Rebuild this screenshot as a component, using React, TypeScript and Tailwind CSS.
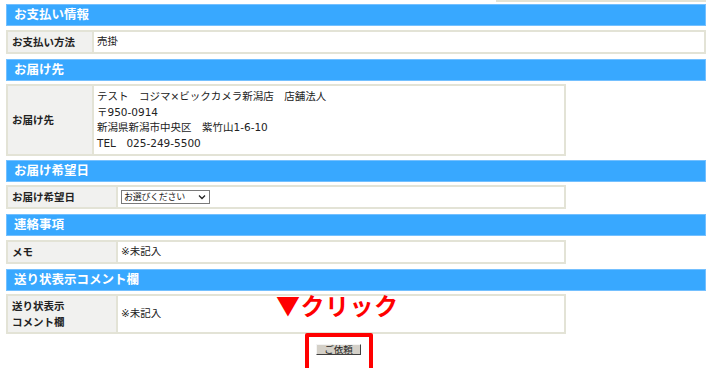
import React from "react";

type Row = { label: React.ReactNode; value: React.ReactNode; labelW: string; boxW: string; h: string };

const FONT = { fontFamily: '"DejaVu Sans", "Noto Sans CJK JP", sans-serif' };
const CJK = { fontFamily: '"Noto Sans CJK JP", sans-serif' };

const Header = ({ title }: { title: string }) => (
  <div className="h-[22px] w-[700px] bg-[#38a8ff] border border-[#74c0ff] flex items-center pl-[7px] text-white font-bold text-[12.5px] leading-none">
    {title}
  </div>
);

const InfoRow = ({ label, value, labelW, boxW, h }: Row) => (
  <div className={`flex border-2 border-[#e3e3d6] bg-white ${boxW} ${h}`}>
    <div className={`flex items-center bg-[#f1f1ef] border-r-2 border-[#e3e3d6] pl-[4px] font-bold text-[10.5px] leading-[16px] text-[#222] ${labelW}`}>
      {label}
    </div>
    <div className="flex items-center pl-[3px] text-[10.5px] leading-[15.5px] text-[#222]">{value}</div>
  </div>
);

// お届け希望日のセレクト（見た目だけ）
const FakeSelect = () => (
  <div className="flex items-center justify-between w-[89px] h-[14px] border border-[#7a7a7a] bg-white pl-[2px] pr-[3px] text-[9px] leading-none tracking-[-0.3px] text-[#222]">
    <span>お選びください</span>
    <svg width="8" height="6" viewBox="0 0 8 6">
      <path d="M1 1.5 L4 4.5 L7 1.5" stroke="#222" strokeWidth="1.3" fill="none" />
    </svg>
  </div>
);

export default function App() {
  return (
    <div className="relative w-[717px] h-[368px] bg-white overflow-hidden" style={FONT}>
      {/* 前のテーブルの下端 */}
      <div className="ml-[496px] w-[210px] h-[2px] bg-[#e3e3d6]" />

      <div className="pl-[6px] flex flex-col">
        <div className="mt-[2px]">
          <Header title="お支払い情報" />
        </div>
        <div className="mt-[4px]">
          <InfoRow label="お支払い方法" value="売掛" labelW="w-[86px]" boxW="w-[700px]" h="h-[24px]" />
        </div>

        <div className="mt-[5px]">
          <Header title="お届け先" />
        </div>
        <div className="mt-[3px]">
          <InfoRow
            label="お届け先"
            value={
              <div className="flex flex-col">
                <span>テスト　コジマ×ビックカメラ新潟店　店舗法人</span>
                <span>〒950-0914</span>
                <span>新潟県新潟市中央区　紫竹山1-6-10</span>
                <span>TEL　025-249-5500</span>
              </div>
            }
            labelW="w-[86px]"
            boxW="w-[560px]"
            h="h-[72px]"
          />
        </div>

        <div className="mt-[4px]">
          <Header title="お届け希望日" />
        </div>
        <div className="mt-[3px]">
          <InfoRow label="お届け希望日" value={<FakeSelect />} labelW="w-[110px]" boxW="w-[560px]" h="h-[24px]" />
        </div>

        <div className="mt-[5px]">
          <Header title="連絡事項" />
        </div>
        <div className="mt-[4px]">
          <InfoRow label="メモ" value="※未記入" labelW="w-[110px]" boxW="w-[560px]" h="h-[24px]" />
        </div>

        <div className="mt-[5px]">
          <Header title="送り状表示コメント欄" />
        </div>
        <div className="mt-[3px]">
          <InfoRow
            label={
              <div className="flex flex-col">
                <span>送り状表示</span>
                <span>コメント欄</span>
              </div>
            }
            value="※未記入"
            labelW="w-[110px]"
            boxW="w-[560px]"
            h="h-[40px]"
          />
        </div>

        {/* 送信ボタン */}
        <div className="mt-[10px] ml-[310px]">
          <button className="w-[45px] h-[11px] flex items-center justify-center bg-[#d4d0c8] border border-t-[#f4f4f4] border-l-[#f4f4f4] border-r-[#404040] border-b-[#404040] text-[9.5px] leading-none text-[#222]">
            ご依頼
          </button>
        </div>
      </div>

      {/* 注釈 */}
      <div
        className="absolute left-[276px] top-[293px] text-[24px] leading-none font-bold text-[#ff0000] tracking-[0.5px]"
        style={CJK}
      >
        ▼クリック
      </div>
      <div className="absolute left-[305px] top-[333px] w-[68px] h-[40px] border-4 border-[#ff0000] rounded-[2px]" />
    </div>
  );
}
